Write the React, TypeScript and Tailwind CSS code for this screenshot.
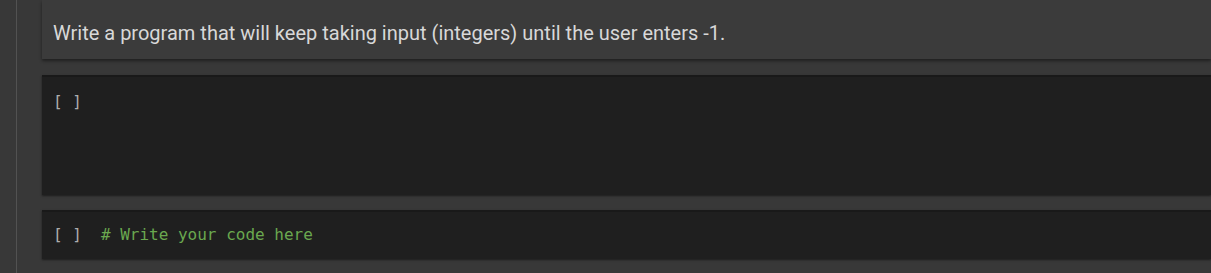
export default function App() {
  return (
    <div className="flex h-[273px] w-full overflow-hidden bg-[#383838]">
      <div className="w-[16px] shrink-0" />
      <div className="w-px shrink-0 bg-[#525252]" />
      <div className="w-[25px] shrink-0" />
      <div className="flex min-w-0 flex-1 flex-col">
        <div className="h-[59px] bg-[#3b3b3b] pl-[11px] pt-[21px] font-['Roboto',sans-serif] text-[20px] leading-[24px] text-[#d8d8d8] shadow-[0_2px_3px_rgba(0,0,0,0.45)]">
          Write a program that will keep taking input (integers) until the user enters -1.
        </div>
        <div className="mt-[16px] h-[120px] border-t-2 border-[#191919] bg-[#1f1f1f] pl-[11px] pt-[15px] font-['DejaVu_Sans_Mono',monospace] text-[16px] leading-[20px] text-[#adadad] shadow-[0_1px_2px_rgba(0,0,0,0.5)]">
          [ ]
        </div>
        <div className="mt-[15px] flex h-[49px] items-center border-t-2 border-[#191919] bg-[#1f1f1f] pb-[2px] pl-[11px] font-['DejaVu_Sans_Mono',monospace] text-[16px] leading-[20px] shadow-[0_1px_2px_rgba(0,0,0,0.5)]">
          <span className="text-[#adadad]">[ ]</span>
          <span className="ml-[19px] text-[#6aa84f]"># Write your code here</span>
        </div>
      </div>
    </div>
  );
}
